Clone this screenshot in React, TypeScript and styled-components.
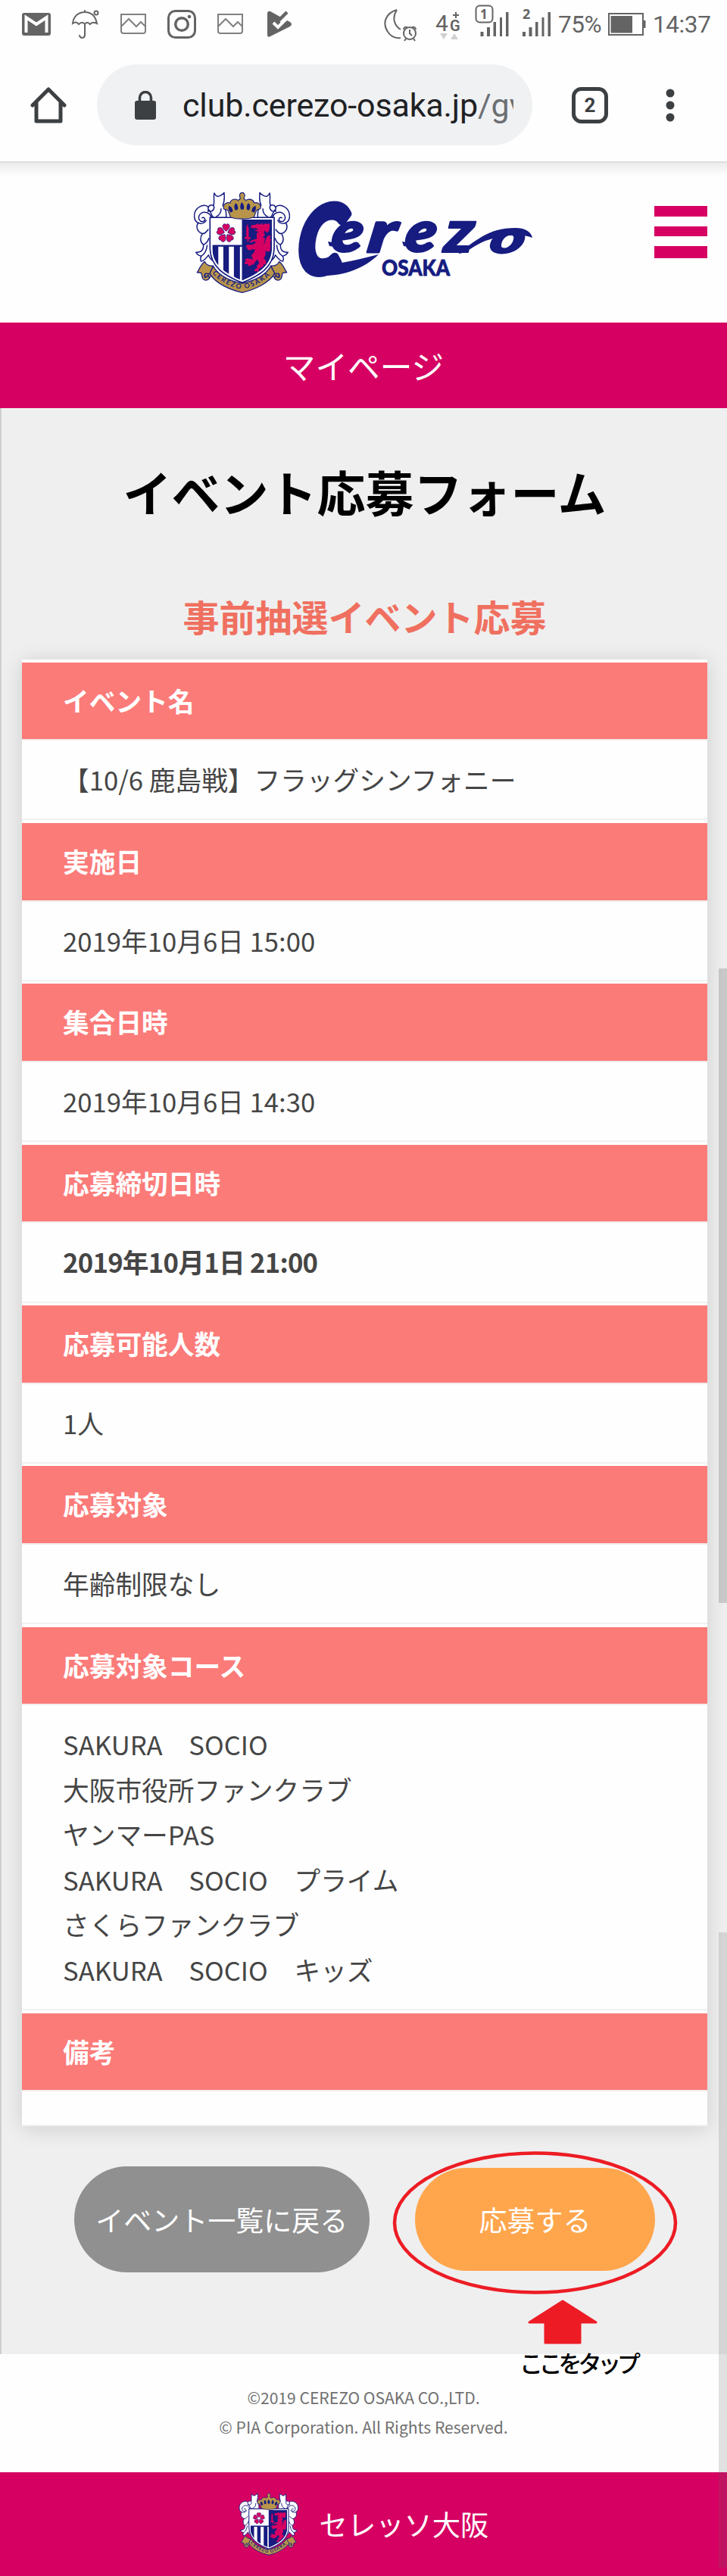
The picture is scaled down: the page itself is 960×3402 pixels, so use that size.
import React from "react";
import styled, { createGlobalStyle } from "styled-components";

const NAVY = "#161c80";
const GOLD = "#b8954a";
const PINK = "#d60062";
const STATUS = "#646464";
const CHROME = "#3c4043";

const GlobalStyle = createGlobalStyle`
  * {
    box-sizing: border-box;
  }

  body {
    margin: 0;
    background: #fefefe;
    font-family: "Noto Sans CJK JP", sans-serif;
  }
`;

const Page = styled.div`
  position: relative;
  width: 960px;
  height: 3402px;
  overflow: hidden;
`;

const ScrollThumb = styled.div<{ $top: number; $height: number; $alpha: number }>`
  position: absolute;
  right: 0;
  top: ${({ $top }) => $top}px;
  width: 11px;
  height: ${({ $height }) => $height}px;
  background: rgba(100, 100, 100, ${({ $alpha }) => $alpha});
`;

/* status bar */

const StatusBar = styled.div`
  height: 64px;
  display: flex;
  justify-content: space-between;
  padding: 0 22px 0 29px;
`;

const Notifications = styled.div`
  display: flex;
  gap: 26px;
  padding-top: 13px;

  svg {
    width: 38px;
    height: 38px;
  }
`;

const SystemIcons = styled.div`
  display: grid;
  grid-template-columns: 68px 52px 63px 47px 66px 59px 76px;
  align-items: start;

  svg {
    display: block;
    height: 64px;
    overflow: visible;
  }
`;

const StatusText = styled.span`
  font-family: Roboto, sans-serif;
  font-size: 31.5px;
  line-height: 66px;
  letter-spacing: -0.4px;
  white-space: nowrap;
  color: ${STATUS};
`;

/* browser toolbar */

const Toolbar = styled.div`
  position: relative;
  height: 151px;
  display: flex;
  align-items: flex-start;
  padding: 21px 0 0 40px;
  border-bottom: 2px solid #dedede;
`;

const ToolbarIcon = styled.svg<{ $gap?: number }>`
  flex: none;
  width: 48px;
  height: 48px;
  margin-top: 30px;
  margin-left: ${({ $gap = 0 }) => $gap}px;
`;

const AddressBar = styled.div`
  width: 575px;
  height: 107px;
  margin-left: 40px;
  padding-left: 49px;
  display: flex;
  align-items: center;
  border-radius: 54px;
  background: #f0f1f3;
`;

const Url = styled.div`
  width: 437px;
  margin-left: 34px;
  overflow: hidden;
  font-family: Roboto, sans-serif;
  font-size: 43px;
  line-height: 60px;
  letter-spacing: -0.15px;
  white-space: nowrap;
  color: #202124;

  span {
    color: #6b6f73;
  }
`;

/* site header */

const Header = styled.header`
  height: 211px;
  display: flex;
  align-items: flex-start;
  padding: 38px 26px 0 255px;
  background: linear-gradient(#ececec, #fefefe 18px);
`;

const Wordmark = styled.svg`
  width: 320px;
  height: 110px;
  margin: 7px 0 0 8px;
  overflow: visible;
`;

const MenuButton = styled.div`
  width: 70px;
  margin: 19px 0 0 auto;
  display: flex;
  flex-direction: column;
  gap: 13px;
`;

const MenuBar = styled.span<{ $thick?: boolean }>`
  height: ${({ $thick }) => ($thick ? 16 : 13.5)}px;
  background: ${PINK};
`;

const PageBar = styled.div`
  height: 113px;
  display: flex;
  align-items: center;
  justify-content: center;
  font-size: 42.7px;
  line-height: 1;
  color: #fff;
  background: ${PINK};
`;

/* main content */

const Main = styled.main`
  position: relative;
  height: 2570px;
  padding: 63px 26px 0 27px;
  border-left: 2px solid #cfcfcf;
  background: #efefef;
`;

const Title = styled.h1`
  margin: 0;
  font-size: 64px;
  line-height: 92px;
  font-weight: 700;
  text-align: center;
  color: #000;
`;

const Subtitle = styled.h2`
  margin: 83px 0 22px;
  font-size: 48px;
  line-height: 72px;
  font-weight: 700;
  text-align: center;
  color: #f07060;
`;

const Card = styled.dl`
  margin: 0;
  padding-top: 3.5px;
  background: #fefefe;
  box-shadow: 0 3px 26px rgba(0, 0, 0, 0.14);
`;

const Term = styled.dt`
  height: 103.7px;
  padding-left: 54px;
  border-bottom: 2px solid #f3eded;
  font-size: 34.7px;
  line-height: 101px;
  font-weight: 700;
  color: #fff;
  background: #fb7b79;
  background-clip: padding-box;
`;

const Detail = styled.dd<{ $bold?: boolean }>`
  min-height: 46px;
  margin: 0 0 3.5px;
  padding: 22px 54px 21.7px;
  border-bottom: 2px solid #f1f1f1;
  font-size: 34.7px;
  line-height: 59.5px;
  font-weight: ${({ $bold }) => ($bold ? 700 : 400)};
  letter-spacing: ${({ $bold }) => ($bold ? "-0.75px" : "normal")};
  color: #454545;

  &:last-child {
    height: 46px;
    margin: 0;
  }
`;

const Actions = styled.div`
  display: flex;
  align-items: center;
  gap: 60.5px;
  margin: 53px 0 0 69px;
`;

const Button = styled.div<{ $primary?: boolean }>`
  width: ${({ $primary }) => ($primary ? 317 : 389.5)}px;
  height: ${({ $primary }) => ($primary ? 136 : 140)}px;
  display: flex;
  align-items: center;
  justify-content: center;
  border-radius: 70px;
  font-size: 37px;
  line-height: 1;
  white-space: nowrap;
  color: #fff;
  background: ${({ $primary }) => ($primary ? "#ffa64d" : "#909090")};
`;

const Marker = styled.svg`
  position: absolute;
  left: 514px;
  top: 2300px;
  width: 384px;
  height: 262px;
`;

const MarkerLabel = styled.div`
  position: absolute;
  left: 684px;
  top: 2559px;
  font-size: 31px;
  line-height: 44px;
  font-weight: 500;
  letter-spacing: -5.2px;
  white-space: nowrap;
  color: #000;
`;

/* footer */

const Copyright = styled.div`
  height: 156px;
  padding-top: 38px;
  font-size: 21.1px;
  line-height: 38.5px;
  text-align: center;
  color: #707070;
`;

const ClubBar = styled.footer`
  height: 137px;
  display: flex;
  align-items: center;
  justify-content: center;
  gap: 28px;
  font-size: 37.3px;
  line-height: 1;
  color: #fff;
  background: ${PINK};
`;

const CrestSvg = styled.svg<{ $width: number }>`
  flex: none;
  width: ${({ $width }) => $width}px;
  height: ${({ $width }) => $width * 1.05}px;
`;

const petals = [0, 72, 144, 216, 288];

function Ornament({ flip }: { flip?: boolean }) {
  return (
    <g
      transform={flip ? "translate(478 0) scale(-1 1)" : undefined}
      fill="#fff"
      stroke={NAVY}
      strokeWidth="4.5"
      strokeLinejoin="round"
    >
      <path d="M116 142C128 130 122 112 104 116C112 105 104 92 88 93C65 96 48 113 50 139C51 150 56 158 65 162C55 178 61 198 82 205C72 220 72 238 86 249C87 265 82 280 56 279C62 289 70 293 78 294C73 302 73 308 77 315C90 312 99 300 106 290C110 302 118 310 130 318L124 270L113 240Z" />
      <path d="M128 141C112 132 119 115 105 108C103 94 116 88 126 94C131 78 125 62 129 44C135 58 143 59 151 55C158 51 165 49 168 42C170 61 168 82 163 92C174 103 178 120 176 142Z" />
      <path
        fill="none"
        d="M117 148C119 120 84 111 71 130C62 144 72 162 87 156C98 149 89 136 79 143M65 162C80 170 92 161 98 151M82 205C94 207 99 194 106 188M86 249C98 244 104 236 108 222M78 294C92 286 99 270 101 250M135 139C150 132 157 123 156 105M126 94C132 101 126 115 115 117"
      />
    </g>
  );
}

function RibbonEnd({ flip }: { flip?: boolean }) {
  return (
    <g
      transform={flip ? "translate(478 0) scale(-1 1)" : undefined}
      fill={GOLD}
      stroke={NAVY}
      strokeWidth="4"
      strokeLinejoin="round"
    >
      <path d="M118 347L95 360L91 375L104 386L119 370Z" />
      <path d="M91 316C97 329 109 334 124 333L112 366C96 360 87 362 91 378C98 381 102 374 104 369L110 382C102 394 88 391 83 383L77 361L61 359C69 349 73 330 91 316Z" />
    </g>
  );
}

function Crest({ id, width }: { id: string; width: number }) {
  return (
    <CrestSvg $width={width} viewBox="45 38 385 404">
      <defs>
        <clipPath id={`${id}-shield`}>
          <path d="M121 149H358V266C355 332 306 363 240 391C174 363 123 332 121 264Z" />
        </clipPath>
        <path id={`${id}-arc`} d="M117 358Q165 412 240 426Q313 412 362 358" />
      </defs>
      <Ornament />
      <Ornament flip />
      <path
        d="M112 141H367V266C364 340 308 372 240 400C172 372 115 340 112 264Z"
        fill="#fff"
        stroke={NAVY}
        strokeWidth="5"
      />
      <g clipPath={`url(#${id}-shield)`}>
        <path d="M121 250H240V257H121ZM121 250H145V400H121ZM165 250H187V400H165ZM207 250H231V400H207Z" fill={NAVY} />
        <path d="M239 140H370V400H239Z" fill={NAVY} />
      </g>
      <g fill={PINK} stroke={NAVY} strokeWidth="2">
        {petals.map((angle) => (
          <path
            key={angle}
            transform={`rotate(${angle} 176 203)`}
            d="M176 196C169 190 161 184 162 175C163 167 170 163 176 169C182 163 189 167 190 175C191 184 183 190 176 196Z"
          />
        ))}
      </g>
      <path
        d="M256 182L260 167L266 182V218H273V226H266V237H260V226H250V218H256ZM278 171L292 170L303 164L306 170L320 163L321 170L331 166L350 166L347 194L338 202L330 193L325 202C334 207 330 215 321 220L330 222C330 240 326 246 319 250C337 244 330 222 342 213L353 213L349 226L355 225L351 240L352 255L350 276L330 274C336 280 334 294 325 302L334 312L335 329L326 325L324 335L307 345L304 356L288 354L290 346L300 341L297 333L308 323L300 308C292 315 289 322 285 328L278 328L271 334L263 332L265 326L250 326L249 319L258 314L249 309L260 303L283 307L276 292L287 279L292 268L281 267L268 272L259 266L260 260L253 257L260 249L281 249L297 239L284 236L276 242L269 237L279 231L298 225L297 204L306 199L288 191L305 188L295 183L282 184L273 180Z"
        fill={PINK}
      />
      <path
        d="M194 140L183 112L167 107C161 91 176 78 192 83C196 67 214 64 224 73L233 65C226 52 232 42 240 42C249 42 254 54 246 65L255 73C266 64 284 68 288 83C303 78 318 91 312 106L297 112L286 140C258 149 221 149 194 140Z"
        fill={GOLD}
        stroke={NAVY}
        strokeWidth="3.5"
      />
      <path d="M238 80C247 89 250 101 245 109H235C230 101 232 89 238 80ZM215 84C207 91 207 104 213 112L223 109C224 98 222 89 215 84ZM265 84C258 89 257 99 258 109L267 112C274 104 273 91 265 84ZM188 94C182 103 187 115 195 121L203 116C202 105 197 98 188 94ZM292 94C283 98 278 105 277 116L286 121C293 115 298 103 292 94Z" fill={NAVY} />
      <RibbonEnd />
      <RibbonEnd flip />
      <path
        d="M125 334C148 376 195 393 240 403C285 393 330 376 354 334L369 363C346 401 291 427 240 439C188 427 133 402 111 363Z"
        fill={GOLD}
        stroke={NAVY}
        strokeWidth="4"
      />
      <text
        fill={NAVY}
        fontFamily="Lato, sans-serif"
        fontSize="27"
        fontWeight="700"
      >
        <textPath href={`#${id}-arc`} startOffset="6" textLength="262">
          CEREZO OSAKA
        </textPath>
      </text>
    </CrestSvg>
  );
}

function Logotype() {
  return (
    <Wordmark viewBox="391 260 320 110" fill={NAVY}>
      <g fontFamily="Lato, sans-serif" fontWeight="900" fontStyle="italic" stroke={NAVY} strokeLinejoin="round">
        <text transform="translate(391 360) skewX(-6) scale(.78 1)" fontSize="122" strokeWidth="10">C</text>
        <text transform="translate(436 332) skewX(-8) scale(1.12 1)" fontSize="74" strokeWidth="3">e</text>
        <text transform="translate(484 333) skewX(-8) scale(1.35 1)" fontSize="76" strokeWidth="3">r</text>
        <text transform="translate(533 332) skewX(-8) scale(1.12 1)" fontSize="74" strokeWidth="3">e</text>
        <text transform="translate(585 333) skewX(-6) scale(1.15 1)" fontSize="78" strokeWidth="2">z</text>
        <text transform="translate(644 334) skewX(-14) scale(1.5 1)" fontSize="58" strokeWidth="2">o</text>
      </g>
      {/* swashes around the lettering */}
      <path d="M425 349C451 349 476 342 500 336C482 354 455 364 428 364Z" />
      <path d="M606 333C629 319 643 301 681 301C692 301 701 305 703 314C683 307 661 312 641 318C627 323 617 334 606 335Z" />
      <path d="M433 319L451 322V327L435 325ZM531 319L549 322V327L533 325Z" />
      <text
        x="504"
        y="364"
        fontFamily="Lato, sans-serif"
        fontWeight="900"
        fontSize="29"
        textLength="90"
        lengthAdjust="spacingAndGlyphs"
        stroke={NAVY}
        strokeWidth=".8"
      >
        OSAKA
      </text>
    </Wordmark>
  );
}

function PictureIcon() {
  return (
    <svg viewBox="0 0 38 38" fill="none" stroke="#808080" strokeWidth="2">
      <path d="M3 6H35V28Q35 31 32 31H6Q3 31 3 28Z" />
      <path d="M3 22L13 12L23 22L29 16L35 22" />
    </svg>
  );
}

function SignalBars() {
  return <path d="M0 42H4V48H0ZM8.5 36H12.5V48H8.5ZM17 29H20.5V48H17ZM25.5 23H28.5V48H25.5ZM33.5 16H37V48H33.5Z" />;
}

function Status() {
  return (
    <StatusBar>
      <Notifications>
        <svg viewBox="0 0 38 38">
          <rect y="4" width="38" height="30" rx="3" fill={STATUS} />
          <path d="M5.5 30V10L19 19L32.5 10V30" fill="none" stroke="#fff" strokeWidth="4" />
        </svg>
        <svg viewBox="0 0 38 38" fill="none" stroke={STATUS} strokeWidth="2" strokeLinecap="round">
          <path d="M3 18C4 8 11 3 19 3S33 8 35 18C31 16 28 16 26 19C23 16 21 16 19 19C17 16 14 16 11 19C9 16 6 16 3 18ZM19 1V3M19 19V33C19 38 13 38 12 34" />
          <circle cx="34" cy="4" r="2.5" />
        </svg>
        <PictureIcon />
        <svg viewBox="0 0 38 38" fill="none" stroke={STATUS}>
          <rect x="1.5" y="1.5" width="35" height="35" rx="9" strokeWidth="3" />
          <circle cx="19" cy="19" r="8.3" strokeWidth="3.5" />
          <circle cx="29" cy="9" r="2.3" fill={STATUS} stroke="none" />
        </svg>
        <PictureIcon />
        <svg viewBox="0 0 38 38">
          <path d="M4 4Q5 1 8 2L26 12L34 16Q38 19 34 22L8 35Q4 37 4 33Z" fill={STATUS} />
          <path d="M21 16L34 4" fill="none" stroke="#fff" strokeWidth="9" />
          <path d="M12 17L18 23L31 10" fill="none" stroke="#fff" strokeWidth="4" />
          <path d="M18 15L30 3" fill="none" stroke={STATUS} strokeWidth="4.5" />
        </svg>
      </Notifications>
      <SystemIcons>
        <svg width="46" viewBox="0 0 46 64" fill="none" stroke={STATUS} strokeWidth="2">
          <path d="M17 13C3 17 -3 30 5 42C9 48 15 51 22 50M17 13C10 24 14 34 22 39" />
          <circle cx="34" cy="44" r="8" />
          <path d="M34 39V44L37 47M26 39Q26 35 31 36M37 36Q42 35 42 39M29 51L27 54M39 51L41 54" />
        </svg>
        <svg width="34" viewBox="0 0 34 64" fill={STATUS} fontFamily="Roboto, sans-serif">
          <text x="0" y="41" fontSize="30">4</text>
          <text x="19" y="41" fontSize="20" fontWeight="600">G</text>
          <path d="M27 16V24M23 20H31" stroke={STATUS} strokeWidth="2" />
          <path d="M6 44H16L11 52ZM20 52L25 44L30 52Z" fill="#d0d0d0" />
        </svg>
        <svg width="46" viewBox="0 0 46 64" fill={STATUS}>
          <g transform="translate(7.5 0)">
            <SignalBars />
          </g>
          <rect x="1.5" y="7.5" width="22" height="22" rx="5" fill="#fefefe" stroke={STATUS} strokeWidth="2" />
          <text x="7" y="25" fontFamily="Noto Sans, sans-serif" fontWeight="700" fontSize="17">1</text>
        </svg>
        <svg width="38" viewBox="0 0 38 64" fill={STATUS}>
          <SignalBars />
          <text x="0" y="25" fontFamily="Noto Sans, sans-serif" fontWeight="700" fontSize="18">2</text>
        </svg>
        <StatusText>75%</StatusText>
        <svg width="50" viewBox="0 0 50 64" fill={STATUS}>
          <rect x="1" y="18" width="45" height="28" fill="none" stroke={STATUS} strokeWidth="2" />
          <path d="M3.5 21H32V43.5H3.5ZM47 27H49.5V37H47Z" />
        </svg>
        <StatusText>14:37</StatusText>
      </SystemIcons>
    </StatusBar>
  );
}

function BrowserToolbar() {
  return (
    <Toolbar>
      <ToolbarIcon viewBox="0 0 48 48" fill="none" stroke={CHROME} strokeWidth="5" strokeLinejoin="round" strokeLinecap="round">
        <path d="M3 24L24 3L45 24M8 21V45H40V21" />
      </ToolbarIcon>
      <AddressBar>
        <svg width="30" height="38" viewBox="0 0 30 38">
          <rect x="1" y="13" width="28" height="25" rx="3" fill={CHROME} />
          <path d="M7.5 15V9A7.5 7.5 0 0 1 22.5 9V15" fill="none" stroke={CHROME} strokeWidth="3.5" />
        </svg>
        <Url>
          club.cerezo-osaka.jp<span>/gv</span>
        </Url>
      </AddressBar>
      <ToolbarIcon $gap={52} viewBox="0 0 48 48">
        <rect x="2.5" y="2.5" width="43" height="43" rx="10" fill="none" stroke={CHROME} strokeWidth="5" />
        <text x="24" y="33" textAnchor="middle" fill={CHROME} fontFamily="Roboto, sans-serif" fontWeight="700" fontSize="26">
          2
        </text>
      </ToolbarIcon>
      <ToolbarIcon $gap={58} viewBox="0 0 48 48" fill={CHROME}>
        <circle cx="24" cy="8" r="5.5" />
        <circle cx="24" cy="24" r="5.5" />
        <circle cx="24" cy="40" r="5.5" />
      </ToolbarIcon>
    </Toolbar>
  );
}

const courses = [
  "SAKURA　SOCIO",
  "大阪市役所ファンクラブ",
  "ヤンマーPAS",
  "SAKURA　SOCIO　プライム",
  "さくらファンクラブ",
  "SAKURA　SOCIO　キッズ",
];

const rows: { label: string; lines: string[]; bold?: boolean }[] = [
  { label: "イベント名", lines: ["【10/6 鹿島戦】フラッグシンフォニー"] },
  { label: "実施日", lines: ["2019年10月6日 15:00"] },
  { label: "集合日時", lines: ["2019年10月6日 14:30"] },
  { label: "応募締切日時", lines: ["2019年10月1日 21:00"], bold: true },
  { label: "応募可能人数", lines: ["1人"] },
  { label: "応募対象", lines: ["年齢制限なし"] },
  { label: "応募対象コース", lines: courses },
  { label: "備考", lines: [] },
];

export default function App() {
  return (
    <Page>
      <GlobalStyle />
      <Status />
      <BrowserToolbar />
      <Header>
        <Crest id="header" width={128} />
        <Logotype />
        <MenuButton>
          <MenuBar />
          <MenuBar />
          <MenuBar $thick />
        </MenuButton>
      </Header>
      <PageBar>マイページ</PageBar>
      <Main>
        <Title>イベント応募フォーム</Title>
        <Subtitle>事前抽選イベント応募</Subtitle>
        <Card>
          {rows.map(({ label, lines, bold }) => (
            <React.Fragment key={label}>
              <Term>{label}</Term>
              <Detail $bold={bold}>
                {lines.map((line) => (
                  <div key={line}>{line}</div>
                ))}
              </Detail>
            </React.Fragment>
          ))}
        </Card>
        <Actions>
          <Button>イベント一覧に戻る</Button>
          <Button $primary>応募する</Button>
        </Actions>
        <Marker viewBox="516 2839 384 262">
          <ellipse cx="706.5" cy="2935.5" rx="185.5" ry="92" fill="none" stroke="#ed1c24" strokeWidth="4.5" />
          <path
            d="M743 3039L787 3067H766V3094H720V3067H699Z"
            fill="#ed1c24"
            stroke="#ed1c24"
            strokeWidth="3"
            strokeLinejoin="round"
          />
        </Marker>
        <MarkerLabel>ここをタップ</MarkerLabel>
      </Main>
      <Copyright>
        <div>©2019 CEREZO OSAKA CO.,LTD.</div>
        <div>© PIA Corporation. All Rights Reserved.</div>
      </Copyright>
      <ClubBar>
        <Crest id="footer" width={79} />
        セレッソ大阪
      </ClubBar>
      <ScrollThumb $top={1279} $height={838} $alpha={0.27} />
      <ScrollThumb $top={2552} $height={839} $alpha={0.19} />
    </Page>
  );
}
